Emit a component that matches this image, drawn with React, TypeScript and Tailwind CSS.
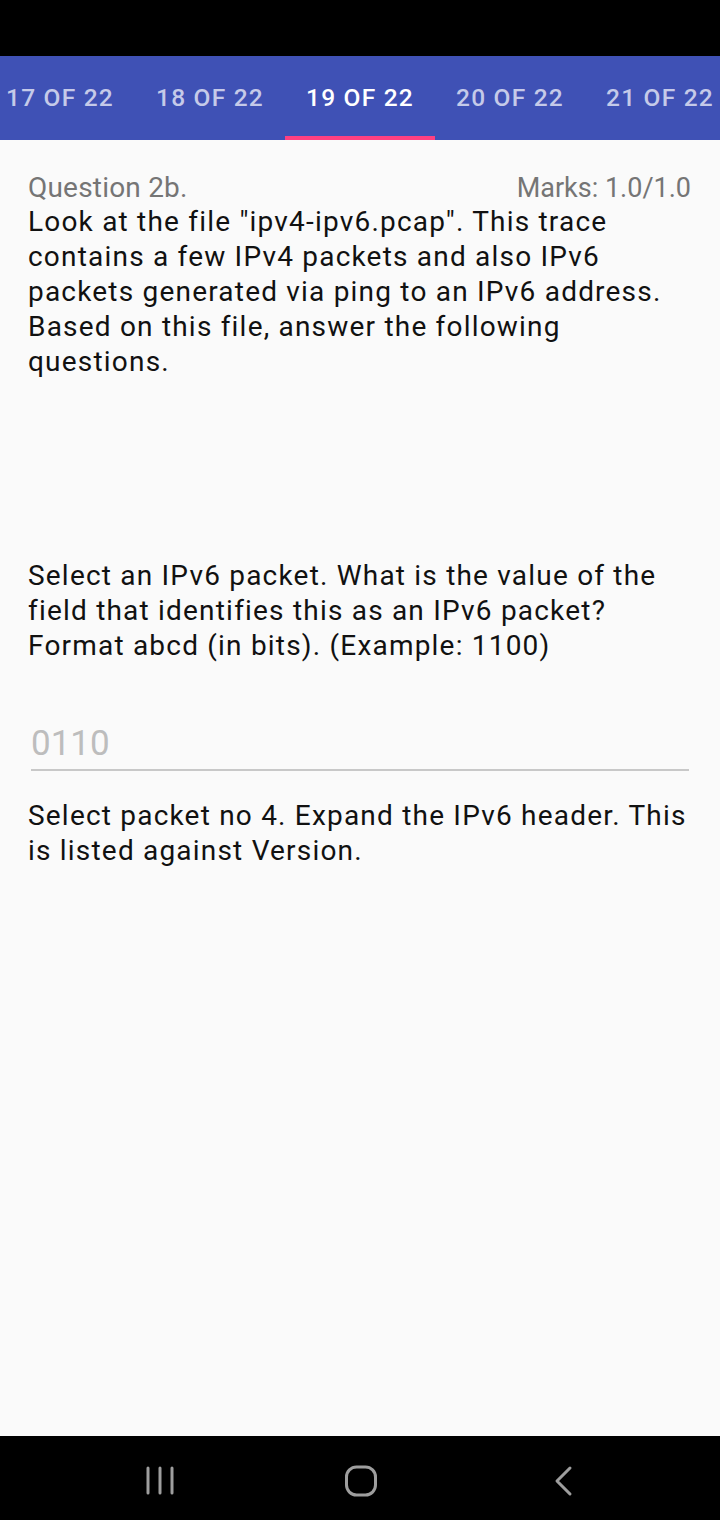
const tabs = ["17 OF 22", "18 OF 22", "19 OF 22", "20 OF 22", "21 OF 22"];
const active = "19 OF 22";

function NavBar() {
  return (
    <nav className="h-[84px] bg-black flex items-center pl-[145px] pt-[6px]">
      <svg width="30" height="30" viewBox="0 0 30 30">
        <g stroke="#9e9e9e" strokeWidth="3" strokeLinecap="round">
          <line x1="3" y1="2" x2="3" y2="27" />
          <line x1="15" y1="2" x2="15" y2="27" />
          <line x1="27" y1="2" x2="27" y2="27" />
        </g>
      </svg>
      <svg className="ml-[169px]" width="34" height="34" viewBox="0 0 34 34">
        <rect x="2.5" y="3" width="29" height="28" rx="10" fill="none" stroke="#9e9e9e" strokeWidth="3" />
      </svg>
      <svg className="ml-[175px]" width="22" height="32" viewBox="0 0 22 32">
        <polyline points="17,3 4,16 17,29" fill="none" stroke="#9e9e9e" strokeWidth="3" strokeLinecap="round" strokeLinejoin="round" />
      </svg>
    </nav>
  );
}

export default function App() {
  return (
    <div className="w-[720px] h-[1520px] flex flex-col bg-[#fafafa] font-['Roboto',sans-serif] overflow-hidden">
      <div className="h-[56px] bg-black" />

      <div className="h-[84px] bg-[#3f51b5] flex overflow-hidden">
        <div className="flex ml-[-15px] shrink-0">
          {tabs.map((t) => (
            <div
              key={t}
              className={
                t === active
                  ? "w-[150px] shrink-0 flex items-center justify-center text-[24.5px] tracking-[1.2px] font-medium text-white border-b-4 border-[#ff4081] pt-[5px]"
                  : "w-[150px] shrink-0 flex items-center justify-center text-[24.5px] tracking-[1.2px] font-medium text-[#c5cae9] border-b-4 border-transparent pt-[5px]"
              }
            >
              {t}
            </div>
          ))}
        </div>
      </div>

      <main className="flex-1 pl-[28px] pr-[28px] pt-[32px]">
        <div className="flex justify-between items-baseline leading-[32px] text-[#757575]">
          <span className="text-[28px] tracking-[0.2px]">Question 2b.</span>
          <span className="text-[27px] pr-[1px]">Marks: 1.0/1.0</span>
        </div>
        <p className="text-[28px] leading-[35px] tracking-[1.2px] text-[#111]">
          Look at the file "ipv4-ipv6.pcap". This trace contains a few IPv4 packets and also IPv6 packets generated via ping to an IPv6 address. Based on this file, answer the following questions.
        </p>

        <p className="mt-[179px] text-[28px] leading-[35px] tracking-[1.2px] text-[#111]">
          Select an IPv6 packet. What is the value of the field that identifies this as an IPv6 packet? Format abcd (in bits). (Example: 1100)
        </p>

        <div className="mt-[63px] ml-[3px] mr-[3px] border-b-2 border-[#c8c8c8] pb-[7px]">
          <div className="text-[35px] leading-[36px] text-[#bdbdbd]">0110</div>
        </div>

        <p className="mt-[27px] text-[28px] leading-[35px] tracking-[1.2px] text-[#111]">
          Select packet no 4. Expand the IPv6 header. This is listed against Version.
        </p>
      </main>

      <NavBar />
    </div>
  );
}
